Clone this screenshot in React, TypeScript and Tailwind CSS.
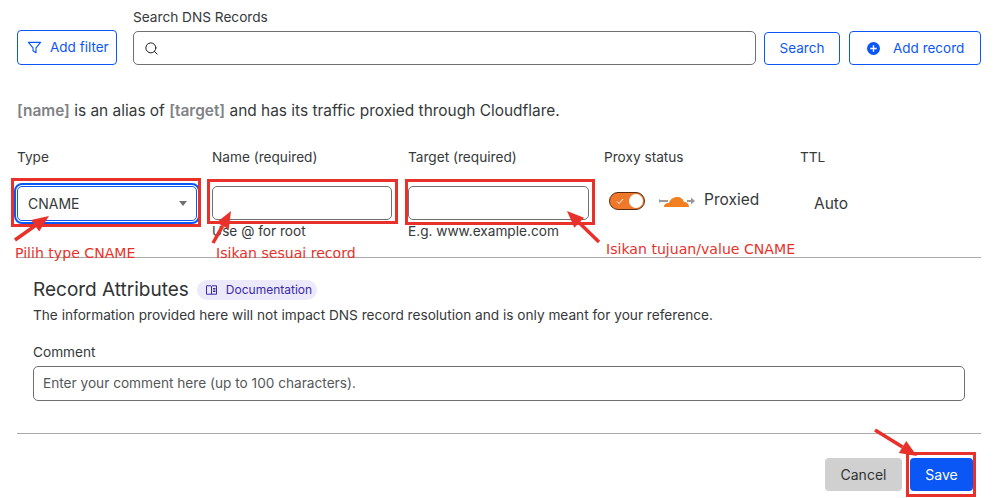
import { Search } from 'lucide-react';

const labelCls = 'text-[13.65px] leading-5 text-[#36393a]';
const inputCls = 'h-[34px] rounded-[5px] border border-[#6f7072] bg-white';
const noteCls = "absolute font-['DejaVu_Sans',sans-serif] text-[14.1px] leading-4 text-[#e8312a] whitespace-nowrap";
const boxCls = 'absolute border-[3px] border-[#e8312a] pointer-events-none';

function Arrow({ x1, y1, x2, y2 }: { x1: number; y1: number; x2: number; y2: number }) {
  const a = Math.atan2(y2 - y1, x2 - x1);
  const px = Math.cos(a + Math.PI / 2);
  const py = Math.sin(a + Math.PI / 2);
  const bx = x2 - Math.cos(a) * 17;
  const by = y2 - Math.sin(a) * 17;
  return (
    <g fill="#e8312a">
      <line x1={x1} y1={y1} x2={bx} y2={by} stroke="#e8312a" strokeWidth="3.5" />
      <polygon points={`${x2},${y2} ${bx + px * 7},${by + py * 7} ${bx - px * 7},${by - py * 7}`} />
    </g>
  );
}

export default function App() {
  return (
    <div className="relative h-[498px] w-[998px] overflow-hidden bg-white font-['Inter',sans-serif] text-[#36393a]">
      <div className="px-[17px] pt-[7px]">
        {/* Search bar */}
        <div className="flex items-end">
          <button className="flex h-[35px] w-[100px] items-center gap-[8px] rounded-[4px] border border-[#0b57f5] pl-[9px] text-[13.5px] text-[#0b57f5]">
            <svg width="15" height="15" viewBox="0 0 16 16" fill="none" stroke="#0b57f5" strokeWidth="1.2" strokeLinejoin="round">
              <path d="M1.5 2.5h13L9.6 8.4v5.1l-3.2-2V8.4z" />
            </svg>
            Add filter
          </button>
          <div className="ml-[16px] w-[623px]">
            <div className={labelCls + ' mb-[4px]'}>Search DNS Records</div>
            <div className={inputCls + ' flex items-center pl-[10px]'}>
              <Search size={15} strokeWidth={1.6} className="text-[#1d1f20]" />
            </div>
          </div>
          <button className="ml-[8px] h-[33px] w-[76px] rounded-[4px] border border-[#0b57f5] text-[13.5px] text-[#0b57f5]">Search</button>
          <button className="ml-[9px] flex h-[34px] w-[132px] items-center gap-[13px] rounded-[4px] border border-[#0b57f5] pl-[17px] text-[13.5px] text-[#0b57f5]">
            <svg width="13" height="13" viewBox="0 0 14 14">
              <circle cx="7" cy="7" r="7" fill="#0b57f5" />
              <path d="M7 3.5v7M3.5 7h7" stroke="#fff" strokeWidth="1.5" />
            </svg>
            Add record
          </button>
        </div>

        <p className="mt-[34px] text-[15.45px] leading-6 text-[#36393a]">
          <b className="font-semibold text-[#808285]">[name]</b> is an alias of <b className="font-semibold text-[#808285]">[target]</b> and has its traffic proxied through Cloudflare.
        </p>

        {/* Record row */}
        <div className="mt-[24px] grid grid-cols-[195px_196px_196px_196px_1fr]">
          <div>
            <div className={labelCls}>Type</div>
            <div className="mt-[19px] flex h-[35px] w-[180px] items-center justify-between rounded-[5px] border border-[#0b57f5] pl-[10px] pr-[9px] text-[14px] outline-[2px] outline-offset-[1px] outline-[#0b57f5]">
              CNAME
              <span className="h-0 w-0 border-x-[4.5px] border-t-[5px] border-x-transparent border-t-[#6f7072]" />
            </div>
          </div>
          <div>
            <div className={labelCls}>Name (required)</div>
            <div className={inputCls + ' mt-[19px] w-[180px]'} />
            <div className="mt-[1px] text-[13.65px] leading-5">Use @ for root</div>
          </div>
          <div>
            <div className={labelCls}>Target (required)</div>
            <div className={inputCls + ' mt-[19px] w-[181px]'} />
            <div className="mt-[1px] text-[13.65px] leading-5">E.g. www.example.com</div>
          </div>
          <div>
            <div className={labelCls}>Proxy status</div>
            <div className="ml-[5px] mt-[25px] flex items-center">
              <span className="flex h-[18px] w-[36px] items-center justify-between rounded-full border border-[#5b2c10] bg-[#f0782a] pl-[6px] pr-[1px]">
                <svg width="8" height="7" viewBox="0 0 8 7" fill="none" stroke="#fff" strokeWidth="1">
                  <path d="M1 3.5 3 5.5 7 1" />
                </svg>
                <span className="h-[14px] w-[14px] rounded-full bg-white" />
              </span>
              <svg width="37" height="18" viewBox="0 0 37 18" className="ml-[14px] -mt-[1px]">
                <path d="M1 9h8M28 9h6" stroke="#9a9a9a" strokeWidth="2" />
                <path d="M32 5.5 36 9l-4 3.500z" fill="#9a9a9a" />
                <path d="M0 7l3 2-3 2z" fill="#9a9a9a" />
                <path d="M5 15c0-3 2-4 5-4 1-4 5-6 8-6 4 0 6 2 7 5 3 0 5 2 5 5z" fill="#f38020" />
              </svg>
              <span className="ml-[8px] -mt-[3px] text-[15.5px] leading-5">Proxied</span>
            </div>
          </div>
          <div>
            <div className={labelCls}>TTL</div>
            <div className="ml-[14px] mt-[27px] text-[15.5px] leading-5">Auto</div>
          </div>
        </div>

        <hr className="mt-[16px] border-[#a9a9a9]" />

        {/* Attributes */}
        <div className="px-[16px] pt-[20px]">
          <div className="flex items-center">
            <h2 className="text-[19px] font-normal leading-6 text-[#313335]">Record Attributes</h2>
            <span className="ml-[8px] flex h-[20px] w-[120px] items-center gap-[9px] rounded-full bg-[#ece9fb] pl-[9px] text-[12px] text-[#3b2aa8]">
              <svg width="11" height="10" viewBox="0 0 11 10" fill="none" stroke="#3b2aa8" strokeWidth="1">
                <path d="M.5.800h4.500l.5.5.5-.5h4.500v8.400h-10zM5.500 1.300v7.900M7 3.500h2.500M7 5h2.500M7 6.500h2.500" />
              </svg>
              Documentation
            </span>
          </div>
          <p className="mt-[3px] text-[13.65px] leading-5">The information provided here will not impact DNS record resolution and is only meant for your reference.</p>
          <div className={labelCls + ' mt-[17px]'}>Comment</div>
          <div className="mt-[4px] flex h-[35px] w-[932px] items-center rounded-[5px] border border-[#6f7072] pl-[9px] text-[13.65px] text-[#55585a]">
            Enter your comment here (up to 100 characters).
          </div>
        </div>

        <hr className="mt-[32px] border-[#a9a9a9]" />

        <div className="mr-[8px] mt-[24px] flex justify-end gap-[8px]">
          <button className="h-[33px] w-[77px] rounded-[4px] bg-[#d0d0d0] text-[14px] text-[#313335]">Cancel</button>
          <button className="h-[33px] w-[63px] rounded-[4px] bg-[#0b57f5] text-[14px] text-white">Save</button>
        </div>
      </div>

      {/* Annotations drawn over the screenshot */}
      <div className={boxCls + ' left-[11px] top-[178px] h-[49px] w-[190px]'} />
      <div className={boxCls + ' left-[207px] top-[179px] h-[45px] w-[191px]'} />
      <div className={boxCls + ' left-[405px] top-[179px] h-[46px] w-[190px]'} />
      <div className={boxCls + ' left-[906px] top-[452px] h-[45px] w-[70px]'} />
      <svg width="998" height="498" className="pointer-events-none absolute left-0 top-0">
        <Arrow x1={15} y1={240} x2={49} y2={216} />
        <Arrow x1={213} y1={243} x2={231} y2={211} />
        <Arrow x1={599} y1={242} x2={567} y2={211} />
        <Arrow x1={875} y1={430} x2={917} y2={456} />
      </svg>
      <span className={noteCls + ' left-[15px] top-[245px]'}>Pilih type CNAME</span>
      <span className={noteCls + ' left-[216px] top-[245px]'}>Isikan sesuai record</span>
      <span className={noteCls + ' left-[606px] top-[241px]'}>Isikan tujuan/value CNAME</span>
    </div>
  );
}
